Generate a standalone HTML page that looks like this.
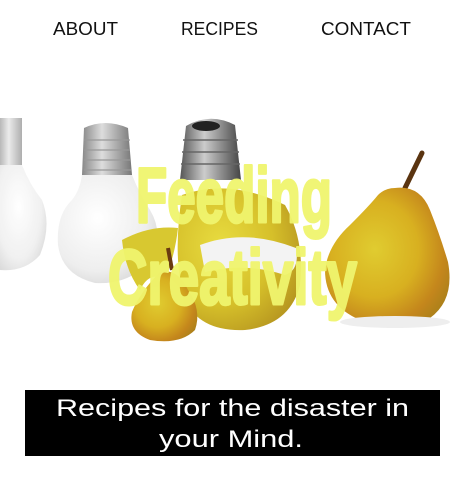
<!DOCTYPE html>
<html><head><meta charset="utf-8"><style>
html,body{margin:0;padding:0;background:#fff;width:466px;height:481px;overflow:hidden}
</style></head><body>
<svg width="466" height="481" viewBox="0 0 466 481" xmlns="http://www.w3.org/2000/svg">
<defs>
<linearGradient id="metal" x1="0" x2="1"><stop offset="0" stop-color="#888"/><stop offset=".4" stop-color="#ddd"/><stop offset="1" stop-color="#777"/></linearGradient>
<linearGradient id="metal2" x1="0" x2="1"><stop offset="0" stop-color="#555"/><stop offset=".4" stop-color="#ccc"/><stop offset="1" stop-color="#444"/></linearGradient>
<radialGradient id="glass" cx=".4" cy=".4" r=".7"><stop offset="0" stop-color="#fff"/><stop offset=".7" stop-color="#eee"/><stop offset="1" stop-color="#d5d5d5"/></radialGradient>
<radialGradient id="pear" cx=".4" cy=".45" r=".7"><stop offset="0" stop-color="#e0cc30"/><stop offset=".5" stop-color="#d8b020"/><stop offset=".8" stop-color="#c4861c"/><stop offset="1" stop-color="#a8801a"/></radialGradient>
<radialGradient id="pear2" cx=".35" cy=".4" r=".7"><stop offset="0" stop-color="#e8dc40"/><stop offset=".6" stop-color="#d6c02a"/><stop offset="1" stop-color="#b89820"/></radialGradient>
</defs>
<rect width="466" height="481" fill="#fff"/>
<g font-family="'Liberation Sans',sans-serif" font-size="18" fill="#111">
<text x="53" y="35" textLength="65" lengthAdjust="spacingAndGlyphs">ABOUT</text>
<text x="181" y="35" textLength="77" lengthAdjust="spacingAndGlyphs">RECIPES</text>
<text x="321" y="35" textLength="90" lengthAdjust="spacingAndGlyphs">CONTACT</text>
</g>
<g opacity=".85">
<rect x="0" y="118" width="22" height="48" fill="url(#metal)" opacity=".7"/>
<path d="M0 165 L22 165 Q30 185 42 200 Q52 225 40 255 Q25 272 0 270 Z" fill="url(#glass)"/>
</g>
<path d="M84 128 Q105 118 128 128 L132 175 L82 175 Z" fill="url(#metal)"/>
<g stroke="#999" stroke-width="1.2"><line x1="84" y1="140" x2="130" y2="140"/><line x1="84" y1="150" x2="130" y2="150"/><line x1="84" y1="160" x2="130" y2="160"/><line x1="84" y1="170" x2="131" y2="170"/></g>
<path d="M82 175 L132 175 Q140 195 150 210 Q165 235 150 262 Q128 285 95 283 Q62 275 58 245 Q56 215 72 200 Q80 190 82 175 Z" fill="url(#glass)"/>
<path d="M186 126 Q210 112 235 125 L241 180 L180 180 Z" fill="url(#metal2)"/>
<ellipse cx="206" cy="126" rx="14" ry="5" fill="#222"/>
<g stroke="#666" stroke-width="1.4"><line x1="183" y1="140" x2="238" y2="140"/><line x1="182" y1="152" x2="239" y2="152"/><line x1="181" y1="164" x2="240" y2="164"/></g>
<path d="M182 195 Q230 178 285 205 Q305 240 300 285 Q290 325 245 330 Q200 332 185 300 Q172 260 182 195 Z" fill="url(#pear2)"/>
<path d="M200 245 Q245 228 296 248 Q300 270 285 275 Q245 262 205 272 Z" fill="#f3f3f3"/>
<path d="M122 240 Q150 225 178 228 Q175 255 165 280 Q150 270 140 290 Q125 270 122 240 Z" fill="#d8c830"/>
<path d="M168 248 L172 270" stroke="#6a3a10" stroke-width="4"/>
<path d="M160 272 Q178 268 188 290 Q202 310 195 330 Q180 345 150 340 Q128 332 132 312 Q140 292 160 272 Z" fill="url(#pear)"/>
<path d="M405 188 L422 153" stroke="#5a3410" stroke-width="5" stroke-linecap="round"/>
<path d="M395 188 Q420 185 430 210 Q440 235 448 262 Q455 300 430 318 Q395 330 360 320 Q325 305 325 270 Q328 245 350 225 Q370 205 378 195 Q385 188 395 188 Z" fill="url(#pear)"/>
<ellipse cx="395" cy="322" rx="55" ry="6" fill="#eee"/>
<g font-family="'Liberation Sans',sans-serif" font-weight="bold" fill="#f0f56e" stroke="#f0f56e" stroke-width="3" stroke-linejoin="round" opacity=".95">
<text x="136" y="222" font-size="78" textLength="196" lengthAdjust="spacingAndGlyphs">Feeding</text>
<text x="108" y="304" font-size="78" textLength="249" lengthAdjust="spacingAndGlyphs">Creativity</text>
</g>
<rect x="25" y="390" width="415" height="66" fill="#000"/>
<g font-family="'Liberation Sans',sans-serif" font-size="24" fill="#fff">
<text x="56" y="416" textLength="353" lengthAdjust="spacingAndGlyphs">Recipes for the disaster in</text>
<text x="159" y="447" textLength="144" lengthAdjust="spacingAndGlyphs">your Mind.</text>
</g>
</svg>
</body></html>
